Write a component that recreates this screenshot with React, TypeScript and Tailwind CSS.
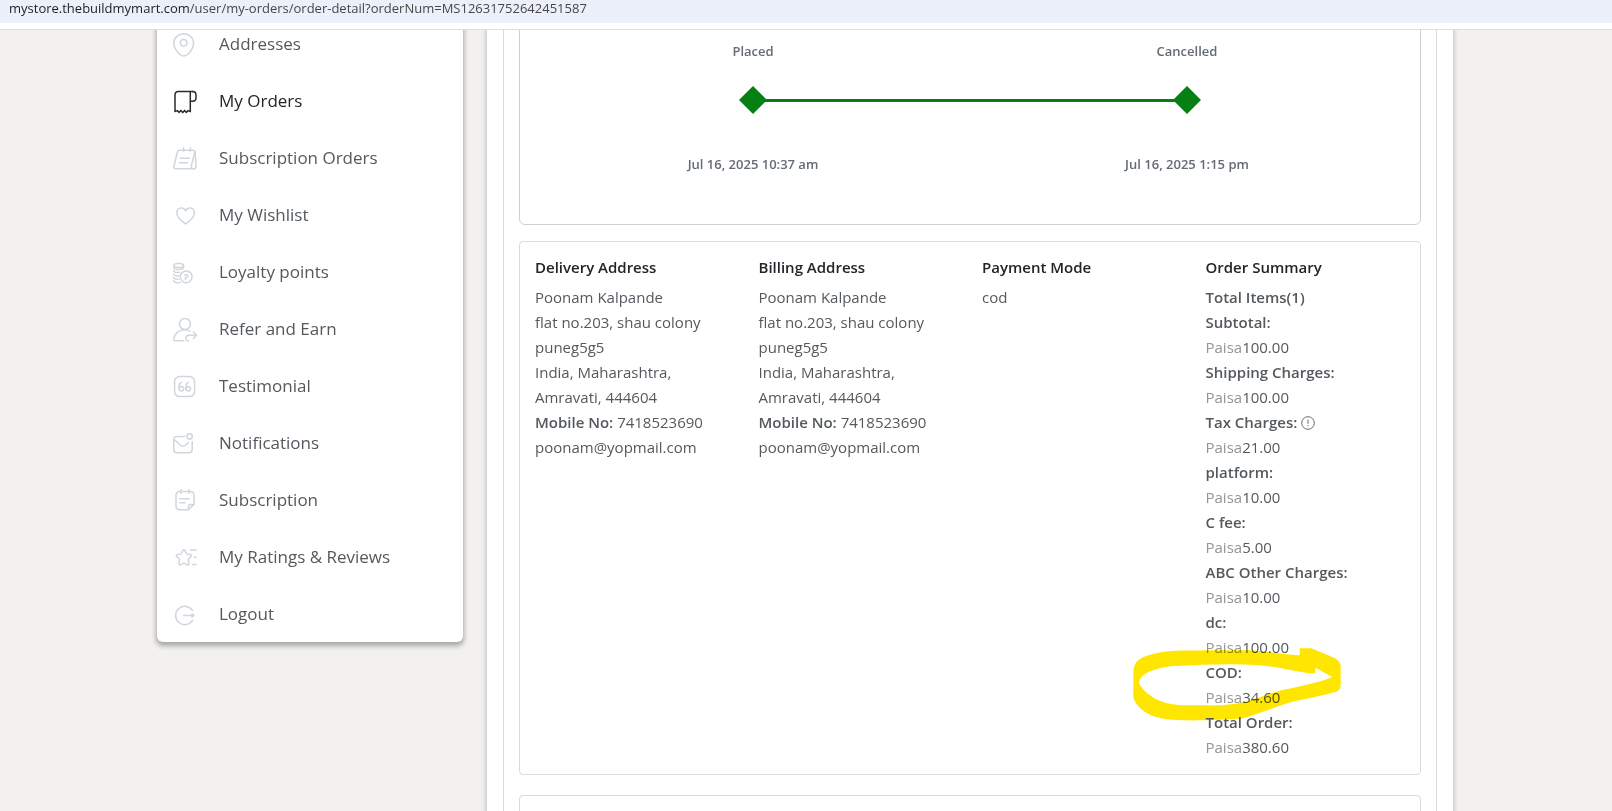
import type { ReactNode } from "react";

type MenuItem = { label: string; icon: ReactNode; active?: boolean };

const menu: MenuItem[] = [
  {
    label: "Addresses",
    icon: (
      <>
        <path d="M10.7.8C5.2.8.8 5 .8 10.4c0 5.2 5.6 12.6 9.9 12.6s9.900-7.400 9.900-12.600C20.600 5 16.200.8 10.700.8Z" />
        <circle cx="10.7" cy="9.8" r="3.3" />
      </>
    ),
  },
  {
    label: "My Orders",
    active: true,
    icon: (
      <>
        <path d="M19.800 1.600H5.200C3.200 1.600 2 2.600 2 4.600v17l2.200-1 2 1.800 1.600-2 1.900 2.200 1.900-2.200 1.800 2 1.600-1.800 2.300 1V1.800" />
        <path d="M19.400 1.600c2.300 0 3.600 1.200 3.600 3.400v2.800c0 2.200-1.200 3.400-3.200 3.400h-2.300" />
      </>
    ),
  },
  {
    label: "Subscription Orders",
    icon: (
      <>
        <path d="M6.6 3.2h13.2c1.5 0 2.3.9 2.4 2.4l.8 13.6c.1 1.7-.8 2.6-2.4 2.6H3c-1.8 0-2.6-1-2.1-2.8L4.4 5c.3-1.2 1-1.8 2.2-1.8Z" />
        <path d="M21.8 4.6 18.4 19c-.3 1.3.2 2.4 1.4 2.8M10.6.8v3.6M17.4.8v3.6M7.4 11.2h9M6.4 15.8h8" />
      </>
    ),
  },
  {
    label: "My Wishlist",
    icon: (
      <path d="M12.6 20C9 17.4 3.8 13.8 3.8 8.8c0-2.8 2-4.8 4.5-4.8 2 0 3.4 1 4.3 2.8C13.5 5 15 4 17 4c2.5 0 4.5 2 4.5 4.8 0 5-5.2 8.600-8.900 11.200Z" />
    ),
  },
  {
    label: "Loyalty points",
    icon: (
      <>
        <ellipse cx="5.7" cy="4.5" rx="4.9" ry="2" />
        <path d="M.8 4.8v1.600c0 1.200 2.200 2 4.900 2s4.900-.8 4.900-2V4.800M.6 9.800c.6 1.300 2.800 1.900 6 1.600M.6 13.200c.6 1.300 2.600 1.900 5.200 1.600M.6 16.600c.6 1.300 2.600 1.900 5.200 1.600M.6 20c.8 1.300 3.600 1.900 6.400 1.400" />
        <circle cx="13.2" cy="15.8" r="5.9" />
        <path d="M11.800 14.200c2.200-.8 3.400 0 3.200 1.200-.2 1-1.400 1.200-2.600 1.200v1.800" />
      </>
    ),
  },
  {
    label: "Refer and Earn",
    icon: (
      <>
        <circle cx="12" cy="6" r="5.5" />
        <path d="M10.400 22.800H2.200c-1 0-1.500-.6-1.400-1.600C1.400 15.400 6 11.800 11.600 11.800c2 0 3.800.4 5.200 1.400M15.400 22.800h-1.200c-1.200-.6-1.600-1.600-1.400-2.800.2-1.800 1.400-2.800 3.200-2.800h7M20.400 14l3 3.200-3 3.200" />
      </>
    ),
  },
  {
    label: "Testimonial",
    icon: (
      <>
        <rect x="1.6" y="1.6" width="20" height="20" rx="5" />
        <circle cx="8.4" cy="13.8" r="2.3" />
        <path d="M6.100 13.800v-2.600c0-2 .8-3.200 2.400-3.800" />
        <circle cx="15.2" cy="13.8" r="2.3" />
        <path d="M12.900 13.800v-2.600c0-2 .8-3.200 2.400-3.800" />
      </>
    ),
  },
  {
    label: "Notifications",
    icon: (
      <>
        <path d="M11.800 4.400H4C2 4.400.8 5.600.8 7.600v10c0 2 1.200 3.200 3.200 3.200h12c2 0 3.200-1.200 3.200-3.200V9.800" />
        <path d="m1.800 8 5.400 5c1.800 1.600 3.600 1.600 5.400 0l2.800-2.600" />
        <circle cx="16.7" cy="4.4" r="2.6" />
      </>
    ),
  },
  {
    label: "Subscription",
    icon: (
      <>
        <path d="M6.800 2.600h10.400c2.400 0 3.800 1.400 3.800 3.800v9l-5.600 5.400H6.800C4.400 20.800 3 19.400 3 17V6.400c0-2.400 1.400-3.800 3.800-3.800Z" />
        <path d="M15.400 20.600v-2.800c0-1.600.8-2.400 2.400-2.400h3M8 .6v3.600M16 .6v3.600M6.800 9.800h9.400M6.800 13.800h5" />
      </>
    ),
  },
  {
    label: "My Ratings & Reviews",
    icon: (
      <>
        <path d="M9.800 4.600c.6-1.200 1.600-1.200 2.200 0l1.400 2.800c.2.400.6.600 1 .8l2.800.4c1.400.2 1.700 1.200.7 2.200l-2.100 2c-.4.400-.6.900-.5 1.400l.6 3c.3 1.700-.6 2.300-2 1.500l-2.400-1.300c-.4-.2-.8-.2-1.200 0l-2.400 1.300c-1.400.8-2.300.2-2-1.500l.6-3c.1-.5-.1-1-.5-1.400l-2.100-2c-1-1-.7-2 .7-2.200l2.800-.4c.4-.1.800-.4 1-.8Z" />
        <path d="M17.400 4h5.800M21.600 11.200h1.600M19.600 18.400h3.600" />
      </>
    ),
  },
  {
    label: "Logout",
    icon: (
      <>
        <path d="M19.600 7.600A9.200 9.200 0 1 0 19.600 17.400" />
        <path d="M10.800 12.500h9.600M19 10.900l2.200 1.600L19 14.100Z" />
      </>
    ),
  },
];

const steps = [
  { title: "Placed", date: "Jul 16, 2025 10:37 am" },
  { title: "Cancelled", date: "Jul 16, 2025 1:15 pm" },
];

const charges = [
  { label: "Subtotal:", amount: "100.00" },
  { label: "Shipping Charges:", amount: "100.00" },
  { label: "Tax Charges:", amount: "21.00", info: true },
  { label: "platform:", amount: "10.00" },
  { label: "C fee:", amount: "5.00" },
  { label: "ABC Other Charges:", amount: "10.00" },
  { label: "dc:", amount: "100.00" },
  { label: "COD:", amount: "34.60", marked: true },
  { label: "Total Order:", amount: "380.60" },
];

function Sidebar() {
  return (
    <nav className="w-[306px] shrink-0 self-start rounded-md bg-white shadow-[0_3px_5px_1px_rgba(0,0,0,0.3)]">
      {menu.map((item) => (
        <a
          key={item.label}
          href="#"
          className={
            item.active
              ? "flex h-[57px] items-center gap-[22px] pl-4 text-[17px] text-[#212529]"
              : "flex h-[57px] items-center gap-[22px] pl-4 text-[17px] text-[#54595e]"
          }
        >
          <svg
            viewBox="0 0 24 24"
            fill="none"
            stroke={item.active ? "#2b2b2b" : "#d0d6dd"}
            strokeWidth="1.5"
            strokeLinecap="round"
            strokeLinejoin="round"
            className="mt-0.5 size-6"
          >
            {item.icon}
          </svg>
          {item.label}
        </a>
      ))}
    </nav>
  );
}

function OrderTracker() {
  return (
    <section className="grid grid-cols-2 rounded-md border border-[#cfcfcf] px-4 pt-[25px] pb-[50px] text-center text-[13px] font-semibold text-[#646b75]">
      {steps.map((step, i) => (
        <div key={step.title}>
          <p className="leading-5">{step.title}</p>
          <div className="my-[25px] flex items-center">
            <span className={i > 0 ? "-mr-1 h-[3px] flex-1 bg-[#068012]" : "-mr-1 h-[3px] flex-1"} />
            <span className="size-7 bg-[#068012] [clip-path:polygon(50%_0,100%_50%,50%_100%,0_50%)]" />
            <span
              className={
                i < steps.length - 1 ? "-ml-1 h-[3px] flex-1 bg-[#068012]" : "-ml-1 h-[3px] flex-1"
              }
            />
          </div>
          <p className="pt-[15px] leading-5">{step.date}</p>
        </div>
      ))}
    </section>
  );
}

function Column({ title, children }: { title: string; children: ReactNode }) {
  return (
    <div className="px-3">
      <h6 className="mb-2 leading-5 font-semibold text-[#212529]">{title}</h6>
      {children}
    </div>
  );
}

function Address() {
  return (
    <address className="not-italic">
      <p>Poonam Kalpande</p>
      <p>flat no.203, shau colony</p>
      <p>puneg5g5</p>
      <p>India, Maharashtra,</p>
      <p>Amravati, 444604</p>
      <p>
        <b className="font-semibold">Mobile No:</b> 7418523690
      </p>
      <p>poonam@yopmail.com</p>
    </address>
  );
}

function Marker() {
  return (
    <svg
      viewBox="70 446 624 219"
      className="pointer-events-none absolute -top-3 -left-[73px] h-[73px] w-[208px] max-w-none mix-blend-multiply"
    >
      <path
        fill="#ffe600"
        fillRule="evenodd"
        d="M71 520C72 500 76 490 88 481C105 468 150 457 185 455C260 452 350 453 420 453C470 456 520 465 570 468V447H605L675 476Q693 485 693 502V558Q693 572 680 577C640 588 590 598 545 608C490 625 440 645 400 657C340 662 270 664 225 663C160 663 120 652 95 630C76 612 69 600 71 575ZM88 551C95 570 125 594 150 604C180 616 210 618 240 618C290 618 330 620 365 615C420 608 450 592 500 577C560 562 625 552 668 533L617 505V522H598C550 514 500 502 440 497C360 492 270 497 190 500C160 502 120 514 105 525C95 533 89 540 88 551Z"
      />
    </svg>
  );
}

function OrderInfo() {
  return (
    <section className="mt-4 grid grid-cols-4 rounded border border-[#e0d8da] px-[3px] pt-[15px] pb-3.5 text-[15px] leading-[25px] text-[#54595e]">
      <Column title="Delivery Address">
        <Address />
      </Column>
      <Column title="Billing Address">
        <Address />
      </Column>
      <Column title="Payment Mode">
        <p>cod</p>
      </Column>
      <Column title="Order Summary">
        <p className="font-semibold">Total Items(1)</p>
        <dl>
          {charges.map((charge) => (
            <div key={charge.label} className="relative">
              <dt className="flex items-center gap-1 font-semibold">
                {charge.label}
                {charge.info && (
                  <button type="button" aria-label="Tax details">
                    <svg viewBox="0 0 14 14" fill="none" stroke="#6b6b6b" className="size-3.5">
                      <circle cx="7" cy="7" r="6.3" />
                      <path d="M7 3.5v4.300M7 9v1.200" />
                    </svg>
                  </button>
                )}
              </dt>
              <dd>
                <span className="text-[#959595]">Paisa</span>
                {charge.amount}
              </dd>
              {charge.marked && <Marker />}
            </div>
          ))}
        </dl>
      </Column>
    </section>
  );
}

export default function App() {
  return (
    <div className="flex h-screen flex-col overflow-hidden bg-[#f2f1f0] font-['Open_Sans','Noto_Sans',sans-serif]">
      <header className="z-10 border-b border-[#dee1e3] bg-white pb-1.5">
        <p className="h-[23px] bg-[#ecf0fa] pl-[9px] text-[13px] leading-4 text-[#474747]">
          <span className="text-[#1f1f1f]">mystore.thebuildmymart.com</span>
          /user/my-orders/order-detail?orderNum=MS12631752642451587
        </p>
      </header>
      <div className="min-h-0 flex-1">
        <div className="mx-auto -mt-[15px] flex w-full max-w-[1298px] gap-6 pr-0.5">
          <Sidebar />
          <main className="min-w-0 flex-1 bg-white px-4 shadow-[0_0_5px_1px_rgba(0,0,0,0.2)]">
            <div className="border-x border-[#e0d8da] px-[15px]">
              <OrderTracker />
              <OrderInfo />
              <section className="mt-5 h-40 rounded border border-[#e0d8da]" />
            </div>
          </main>
        </div>
      </div>
    </div>
  );
}
